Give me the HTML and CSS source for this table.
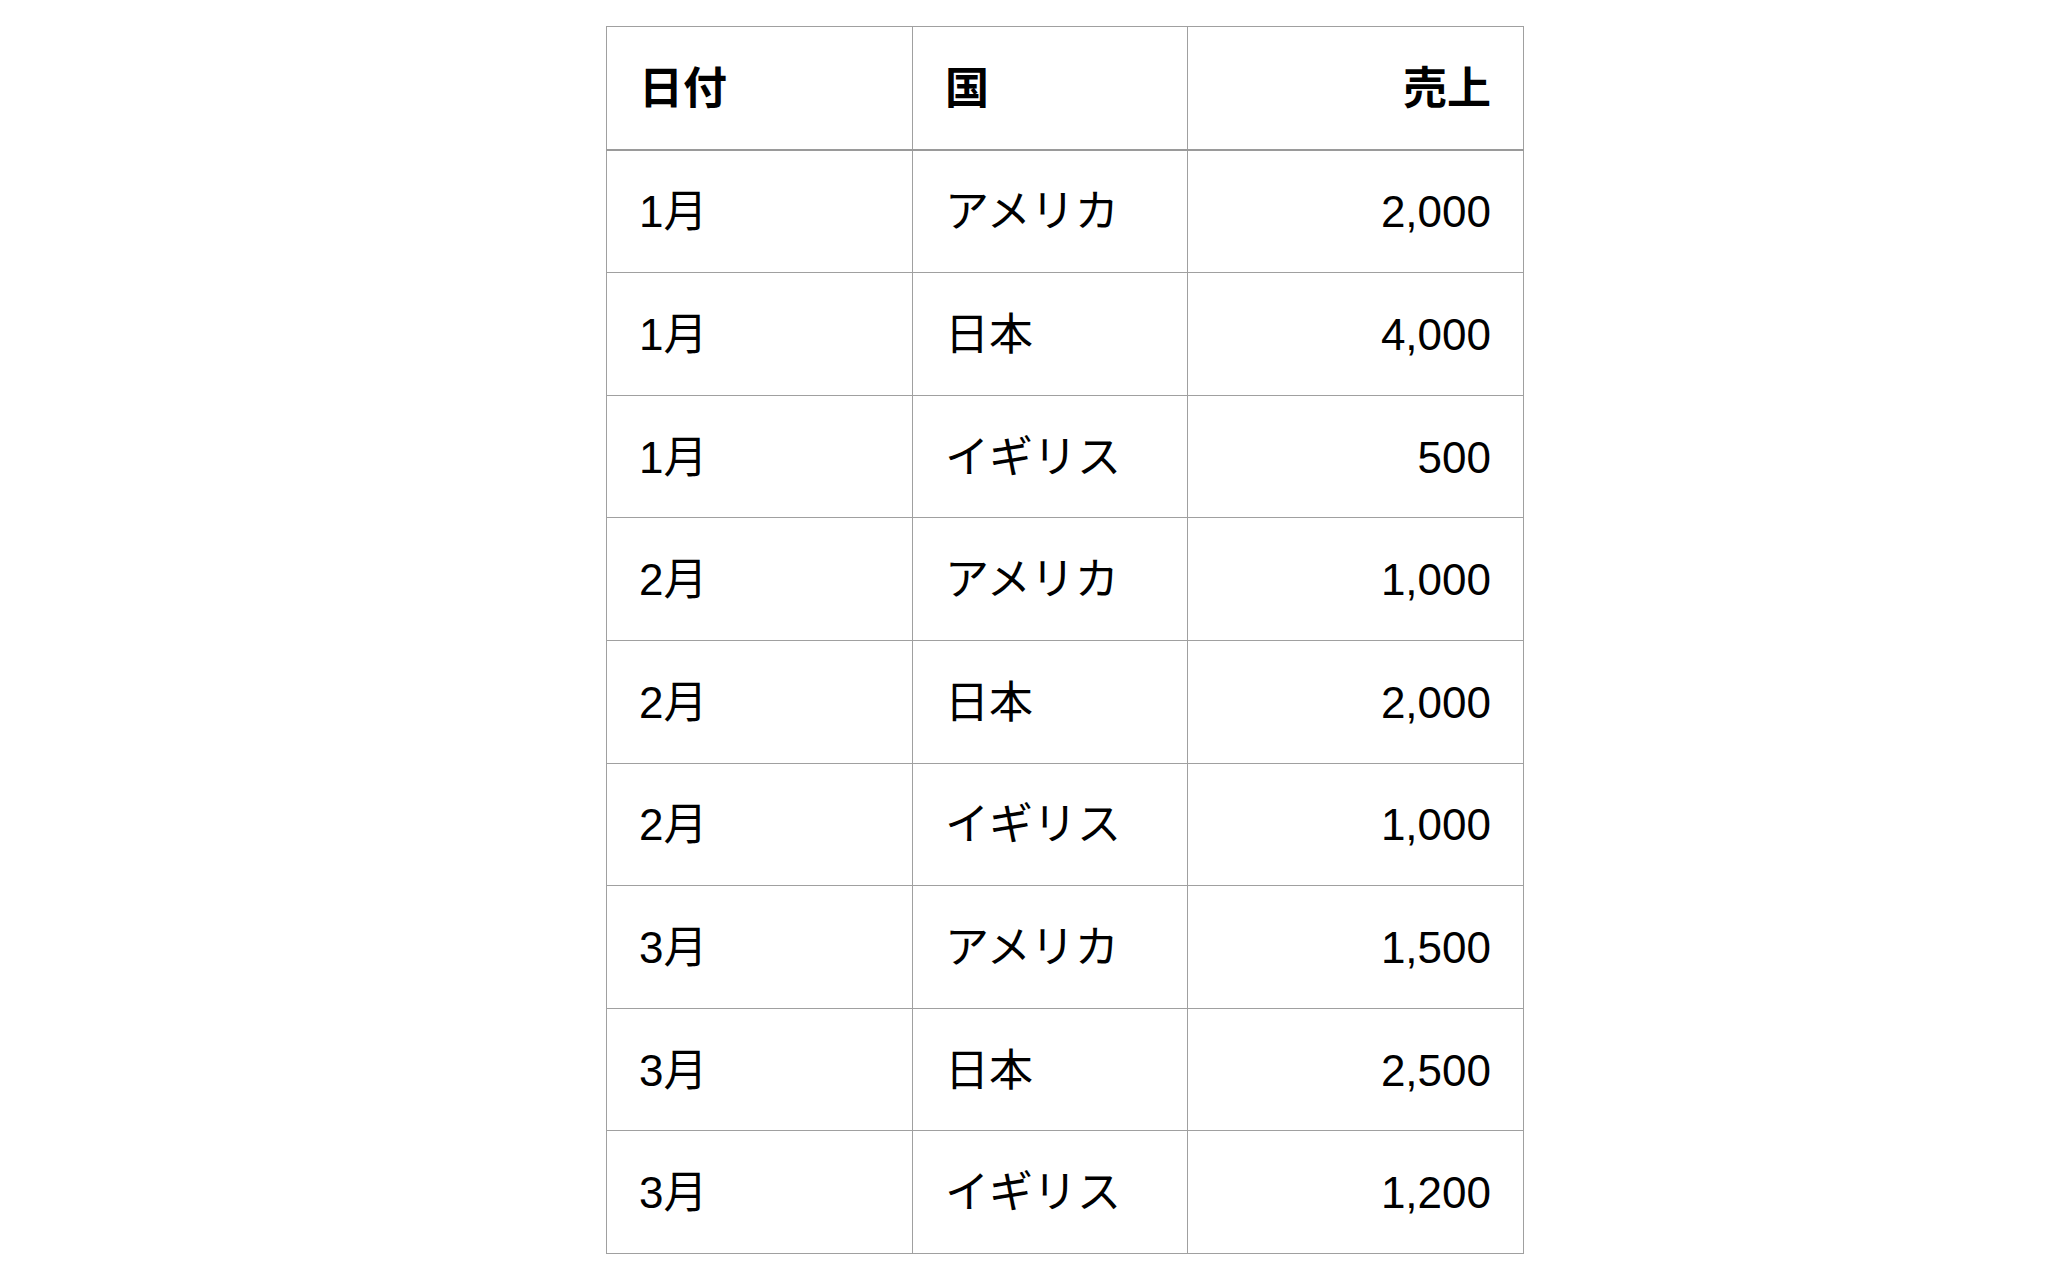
FILE: index.html
```html
<!DOCTYPE html>
<html lang="ja">
<head>
  <meta charset="UTF-8">
  <title>売上</title>
  <link rel="stylesheet" href="styles.css">
</head>
<body>
  <div class="page">
    <table class="sales">
      <colgroup>
        <col class="col-date">
        <col class="col-country">
        <col class="col-amount">
      </colgroup>
      <thead>
        <tr>
          <th>日付</th>
          <th>国</th>
          <th class="num">売上</th>
        </tr>
      </thead>
      <tbody>
        <tr><td>1月</td><td>アメリカ</td><td class="num">2,000</td></tr>
        <tr><td>1月</td><td>日本</td><td class="num">4,000</td></tr>
        <tr><td>1月</td><td>イギリス</td><td class="num">500</td></tr>
        <tr><td>2月</td><td>アメリカ</td><td class="num">1,000</td></tr>
        <tr><td>2月</td><td>日本</td><td class="num">2,000</td></tr>
        <tr><td>2月</td><td>イギリス</td><td class="num">1,000</td></tr>
        <tr><td>3月</td><td>アメリカ</td><td class="num">1,500</td></tr>
        <tr><td>3月</td><td>日本</td><td class="num">2,500</td></tr>
        <tr><td>3月</td><td>イギリス</td><td class="num">1,200</td></tr>
      </tbody>
    </table>
  </div>
</body>
</html>
```

FILE: styles.css
```css
body {
  margin: 0;
  background-color: #fff;
  font-family: 'Liberation Sans', 'Noto Sans CJK JP', sans-serif;
  color: #000;
}
.page {
  padding: 26px 0 0 606px;
}
.sales {
  border-collapse: collapse;
  table-layout: fixed;
  width: 917px;
  font-size: 44px;
}
.col-date { width: 306px; }
.col-country { width: 275px; }
.col-amount { width: 336px; }

.sales th,
.sales td {
  border: 1px solid #a0a0a0;
  padding: 2px 32px 0;
  height: 119.6px;
  text-align: left;
  vertical-align: middle;
  line-height: 1;
}
.sales th {
  font-weight: bold;
  border-bottom: 2px solid #9a9a9a;
}
.sales .num {
  text-align: right;
}
```
